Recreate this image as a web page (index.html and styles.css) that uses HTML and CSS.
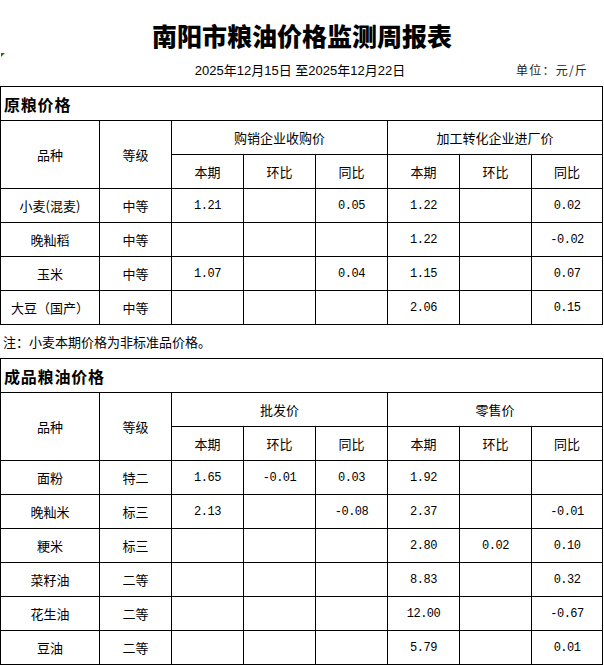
FILE: index.html
```html
<!DOCTYPE html>
<html lang="zh-CN">
<head>
<meta charset="utf-8">
<title>南阳市粮油价格监测周报表</title>
<link rel="stylesheet" href="styles.css">
</head>
<body>
<div class="sheet">
  <h1 class="title">南阳市粮油价格监测周报表</h1>
  <div class="meta">
    <div class="meta-left"><span class="flag"></span></div>
    <div class="date">2025年12月15日 至2025年12月22日</div>
    <div class="unit">单位：元/斤</div>
  </div>

  <table class="grid">
    <colgroup>
      <col class="c-name"><col class="c-grade"><col class="c-v"><col class="c-v"><col class="c-v"><col class="c-v"><col class="c-v"><col class="c-last">
    </colgroup>
    <tr><td class="section" colspan="8">原粮价格</td></tr>
    <tr><td rowspan="2">品种</td><td rowspan="2">等级</td><td colspan="3">购销企业收购价</td><td colspan="3">加工转化企业进厂价</td></tr>
    <tr><td>本期</td><td>环比</td><td>同比</td><td>本期</td><td>环比</td><td>同比</td></tr>
    <tr><td>小麦(混麦)</td><td>中等</td><td class="n">1.21</td><td class="n"></td><td class="n">0.05</td><td class="n">1.22</td><td class="n"></td><td class="n">0.02</td></tr>
    <tr><td>晚籼稻</td><td>中等</td><td class="n"></td><td class="n"></td><td class="n"></td><td class="n">1.22</td><td class="n"></td><td class="n">-0.02</td></tr>
    <tr><td>玉米</td><td>中等</td><td class="n">1.07</td><td class="n"></td><td class="n">0.04</td><td class="n">1.15</td><td class="n"></td><td class="n">0.07</td></tr>
    <tr><td>大豆（国产）</td><td>中等</td><td class="n"></td><td class="n"></td><td class="n"></td><td class="n">2.06</td><td class="n"></td><td class="n">0.15</td></tr>
  </table>

  <div class="note">注：小麦本期价格为非标准品价格。</div>

  <table class="grid">
    <colgroup>
      <col class="c-name"><col class="c-grade"><col class="c-v"><col class="c-v"><col class="c-v"><col class="c-v"><col class="c-v"><col class="c-last">
    </colgroup>
    <tr><td class="section" colspan="8">成品粮油价格</td></tr>
    <tr><td rowspan="2">品种</td><td rowspan="2">等级</td><td colspan="3">批发价</td><td colspan="3">零售价</td></tr>
    <tr><td>本期</td><td>环比</td><td>同比</td><td>本期</td><td>环比</td><td>同比</td></tr>
    <tr><td>面粉</td><td>特二</td><td class="n">1.65</td><td class="n">-0.01</td><td class="n">0.03</td><td class="n">1.92</td><td class="n"></td><td class="n"></td></tr>
    <tr><td>晚籼米</td><td>标三</td><td class="n">2.13</td><td class="n"></td><td class="n">-0.08</td><td class="n">2.37</td><td class="n"></td><td class="n">-0.01</td></tr>
    <tr><td>粳米</td><td>标三</td><td class="n"></td><td class="n"></td><td class="n"></td><td class="n">2.80</td><td class="n">0.02</td><td class="n">0.10</td></tr>
    <tr><td>菜籽油</td><td>二等</td><td class="n"></td><td class="n"></td><td class="n"></td><td class="n">8.83</td><td class="n"></td><td class="n">0.32</td></tr>
    <tr><td>花生油</td><td>二等</td><td class="n"></td><td class="n"></td><td class="n"></td><td class="n">12.00</td><td class="n"></td><td class="n">-0.67</td></tr>
    <tr><td>豆油</td><td>二等</td><td class="n"></td><td class="n"></td><td class="n"></td><td class="n">5.79</td><td class="n"></td><td class="n">0.01</td></tr>
  </table>
</div>
</body>
</html>
```

FILE: styles.css
```css
html, body {
  margin: 0;
  padding: 0;
  background: #fff;
}

body {
  font-family: "Noto Sans CJK SC", "Liberation Sans", sans-serif;
  font-size: 13px;
  color: #000;
}

.sheet {
  width: 604px;
  padding-top: 18px;
}

.title {
  margin: 0;
  height: 34px;
  display: flex;
  align-items: center;
  justify-content: center;
  font-size: 25px;
  font-weight: 900;
  line-height: 1;
  letter-spacing: 0;
}

.meta {
  height: 34px;
  display: grid;
  grid-template-columns: 1fr auto 1fr;
  align-items: center;
}

.meta-left {
  align-self: start;
  height: 100%;
}

.flag {
  display: block;
  width: 0;
  height: 0;
  margin: 1px 0 0 1px;
  border-top: 4px solid #0e7d0e;
  border-right: 4px solid transparent;
}

.date {
  font-family: "Liberation Sans", "Noto Sans CJK SC", sans-serif;
  font-size: 13px;
  padding-right: 4px;
}

.unit {
  justify-self: end;
  padding-right: 16px;
  font-size: 12px;
  letter-spacing: 1.2px;
  color: #222;
}

.grid {
  width: 603px;
  border-collapse: collapse;
  table-layout: fixed;
}

.c-name { width: 99px; }
.c-grade { width: 72px; }
.c-v { width: 72px; }
.c-last { width: 71px; }

.grid tr {
  height: 34px;
}

.grid td {
  border: 1px solid #000;
  padding: 0;
  text-align: center;
  vertical-align: middle;
  white-space: nowrap;
  line-height: 16px;
}

.grid td.n {
  font-family: "Liberation Mono", "DejaVu Sans Mono", monospace;
  font-size: 12px;
  letter-spacing: -0.5px;
}

.grid td.section {
  text-align: left;
  padding-left: 3px;
  font-size: 16px;
  font-weight: 700;
  letter-spacing: 0.8px;
}

.note {
  height: 33px;
  display: flex;
  align-items: center;
  padding-left: 3px;
  font-size: 13px;
}
```
